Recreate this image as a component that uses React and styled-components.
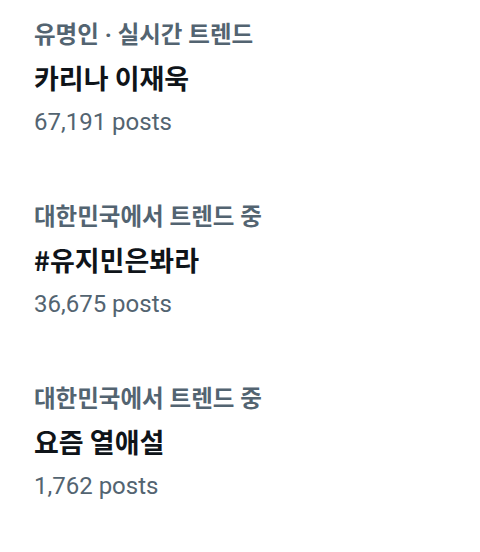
import React from "react";
import styled, { createGlobalStyle } from "styled-components";

const Global = createGlobalStyle`
  html, body { margin: 0; padding: 0; background: #ffffff; }
  body { -webkit-font-smoothing: antialiased; }
`;

const List = styled.div`
  display: flex;
  flex-direction: column;
  gap: 47px;
  padding: 10px 0 0 34px;
`;

const Item = styled.div`
  display: flex;
  flex-direction: column;
`;

const Category = styled.div`
  font-family: Roboto, "Noto Sans CJK KR", sans-serif;
  font-size: 23.5px;
  font-weight: 700;
  line-height: 39px;
  padding-top: 6px;
  color: #536471;
  white-space: nowrap;
`;

const Title = styled.div`
  font-family: "Noto Sans CJK KR", "Noto Sans", sans-serif;
  font-size: 27px;
  font-weight: 700;
  line-height: 45px;
  color: #0f1419;
  white-space: nowrap;
`;

const Posts = styled.div`
  font-family: Roboto, "Noto Sans CJK KR", sans-serif;
  font-size: 24px;
  font-weight: 400;
  line-height: 45px;
  color: #536471;
`;

const trends = [
  { category: "유명인 · 실시간 트렌드", title: "카리나 이재욱", posts: "67,191 posts" },
  { category: "대한민국에서 트렌드 중", title: "#유지민은봐라", posts: "36,675 posts" },
  { category: "대한민국에서 트렌드 중", title: "요즘 열애설", posts: "1,762 posts" },
];

export default function App() {
  return (
    <>
      <Global />
      <List>
        {trends.map((t, i) => (
          <Item key={i}>
            <Category>{t.category}</Category>
            <Title>{t.title}</Title>
            <Posts>{t.posts}</Posts>
          </Item>
        ))}
      </List>
    </>
  );
}
